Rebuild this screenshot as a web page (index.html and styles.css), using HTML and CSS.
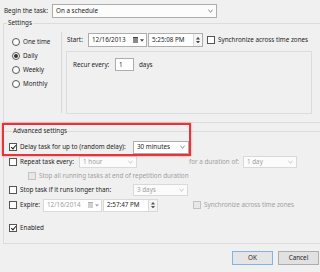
FILE: index.html
```html
<!DOCTYPE html>
<html>
<head>
<meta charset="utf-8">
<link rel="stylesheet" href="styles.css">
</head>
<body>
<div class="top">
  <span class="top-label">Begin the task:</span>
  <div class="select main"><span>On a schedule</span><svg class="chev" viewBox="0 0 6 4"><path d="M0.5 0.8 L3 3.2 L5.5 0.8" fill="none" stroke="#444" stroke-width="0.9"/></svg></div>
</div>

<fieldset class="group settings">
  <legend>Settings</legend>
  <div class="settings-body">
    <div class="freq">
      <div class="radio-row"><span class="radio"></span><span>One time</span></div>
      <div class="radio-row"><span class="radio on"></span><span>Daily</span></div>
      <div class="radio-row"><span class="radio"></span><span>Weekly</span></div>
      <div class="radio-row"><span class="radio"></span><span>Monthly</span></div>
    </div>
    <div class="vsep"></div>
    <div class="sched">
      <div class="start-row">
        <span class="start-label">Start:</span>
        <div class="field date"><span>12/16/2013</span><span class="cal"></span><svg class="tri" viewBox="0 0 5 3"><path d="M0 0 L5 0 L2.5 3 Z" fill="#444"/></svg></div>
        <div class="field time"><span>5:25:08 PM</span><span class="spin"><svg viewBox="0 0 5 3"><path d="M0 3 L5 3 L2.5 0 Z" fill="#444"/></svg><svg viewBox="0 0 5 3"><path d="M0 0 L5 0 L2.5 3 Z" fill="#444"/></svg></span></div>
        <span class="check sync"></span><span>Synchronize across time zones</span>
      </div>
      <div class="recur-box">
        <div class="recur-row"><span class="recur-label">Recur every:</span><div class="field num">1</div><span class="days">days</span></div>
      </div>
    </div>
  </div>
</fieldset>

<fieldset class="group advanced">
  <legend>Advanced settings</legend>
  <div class="row r-delay">
    <span class="check on"></span><span class="lbl-delay">Delay task for up to (random delay):</span>
    <div class="select s-delay"><span>30 minutes</span><svg class="chev" viewBox="0 0 6 4"><path d="M0.5 0.8 L3 3.2 L5.5 0.8" fill="none" stroke="#444" stroke-width="0.9"/></svg></div>
  </div>
  <div class="row r-repeat">
    <span class="check"></span><span class="lbl-repeat">Repeat task every:</span>
    <div class="select dis s-hour"><span>1 hour</span><svg class="chev" viewBox="0 0 6 4"><path d="M0.5 0.8 L3 3.2 L5.5 0.8" fill="none" stroke="#aaa" stroke-width="0.9"/></svg></div>
    <span class="dis-text lbl-dur">for a duration of:</span>
    <div class="select dis s-day"><span>1 day</span><svg class="chev" viewBox="0 0 6 4"><path d="M0.5 0.8 L3 3.2 L5.5 0.8" fill="none" stroke="#aaa" stroke-width="0.9"/></svg></div>
  </div>
  <div class="row r-stopall">
    <span class="check dis"></span><span class="dis-text">Stop all running tasks at end of repetition duration</span>
  </div>
  <div class="row r-stop">
    <span class="check"></span><span class="lbl-stop">Stop task if it runs longer than:</span>
    <div class="select dis s-days"><span>3 days</span><svg class="chev" viewBox="0 0 6 4"><path d="M0.5 0.8 L3 3.2 L5.5 0.8" fill="none" stroke="#aaa" stroke-width="0.9"/></svg></div>
  </div>
  <div class="row r-expire">
    <span class="check"></span><span class="lbl-expire">Expire:</span>
    <div class="field date dis e-date"><span>12/16/2014</span><span class="cal dis"></span><svg class="tri" viewBox="0 0 5 3"><path d="M0 0 L5 0 L2.5 3 Z" fill="#aaa"/></svg></div>
    <div class="field time e-time"><span>2:57:47 PM</span><span class="spin"><svg viewBox="0 0 5 3"><path d="M0 3 L5 3 L2.5 0 Z" fill="#555"/></svg><svg viewBox="0 0 5 3"><path d="M0 0 L5 0 L2.5 3 Z" fill="#555"/></svg></span></div>
    <span class="check dis e-sync"></span><span class="dis-text">Synchronize across time zones</span>
  </div>
  <div class="row r-enabled">
    <span class="check on"></span><span>Enabled</span>
  </div>
</fieldset>

<div class="buttons">
  <div class="btn default">OK</div>
  <div class="btn">Cancel</div>
</div>

<div class="highlight"></div>
</body>
</html>
```

FILE: styles.css
```css
html, body {
  margin: 0;
  padding: 0;
}
body {
  width: 320px;
  height: 272px;
  overflow: hidden;
  position: relative;
  background: #f0f0f0;
  font-family: "Noto Sans", "DejaVu Sans", sans-serif;
  font-size: 6.3px;
  color: #1e1e1e;
  line-height: 8px;
}
.top {
  display: flex;
  align-items: center;
  height: 14px;
  margin-top: 4px;
  padding-left: 4px;
}
.top-label {
  width: 48px;
}
.select {
  box-sizing: border-box;
  display: flex;
  align-items: center;
  justify-content: space-between;
  border: 1px solid #adadad;
  background: #fcfcfc;
  padding: 0 3px 0 3px;
}
.select.main {
  width: 165px;
  height: 14px;
}
.chev {
  width: 5px;
  height: 4px;
  flex: none;
}
.select.dis {
  border-color: #d9d9d9;
  background: #fbfbfb;
  color: #a0a0a0;
}
.dis-text {
  color: #a0a0a0;
  white-space: nowrap;
}

.group {
  box-sizing: border-box;
  margin: 0 0 0 3px;
  padding: 0;
  min-width: 0;
  width: 317px;
  border: 1px solid #dcdcdc;
  border-right: none;
}
.group legend {
  margin-left: 3px;
  padding: 0 1px;
  line-height: 8px;
}
.settings {
  margin-top: 1px;
  padding-bottom: 8px;
}
.settings-body {
  display: flex;
  align-items: flex-start;
}
.freq {
  width: 57px;
  padding-top: 8px;
}
.radio-row {
  display: flex;
  align-items: center;
  height: 14px;
  padding-left: 8px;
  gap: 3px;
}
.radio {
  box-sizing: border-box;
  width: 8px;
  height: 8px;
  border: 1px solid #555;
  border-radius: 50%;
  background: #fff;
  display: flex;
  align-items: center;
  justify-content: center;
}
.radio.on::after {
  content: "";
  width: 4px;
  height: 4px;
  border-radius: 50%;
  background: #333;
}
.vsep {
  width: 0;
  height: 81px;
  margin-top: 5px;
  border-left: 1px solid #d8d8d8;
}
.sched {
  padding-left: 4px;
}
.start-row {
  display: flex;
  align-items: center;
  height: 14px;
  margin-top: 6px;
  padding-left: 1px;
  white-space: nowrap;
}
.start-label {
  width: 21px;
}
.field {
  box-sizing: border-box;
  display: flex;
  align-items: center;
  height: 14px;
  border: 1px solid #adadad;
  background: #fff;
  padding-left: 3px;
}
.field.date {
  width: 59px;
}
.field.time {
  width: 55px;
  margin-left: 1px;
}
.cal {
  width: 5px;
  height: 6px;
  margin-left: auto;
  background: #8a8a8a;
  border-top: 1px solid #444;
  box-sizing: border-box;
}
.cal.dis {
  background: #d0d0d0;
  border-top-color: #b0b0b0;
}
.tri {
  width: 4px;
  height: 3px;
  margin: 0 2px 0 2px;
}
.spin {
  margin-left: auto;
  width: 8px;
  height: 100%;
  border-left: 1px solid #d9d9d9;
  background: #f4f4f4;
  display: flex;
  flex-direction: column;
  align-items: center;
  justify-content: center;
  gap: 1px;
}
.spin svg {
  width: 4px;
  height: 2.5px;
}
.check {
  box-sizing: border-box;
  flex: none;
  width: 8px;
  height: 8px;
  border: 1px solid #555;
  background: #fff;
  position: relative;
}
.check.on::after {
  content: "";
  position: absolute;
  left: 1.5px;
  top: 0px;
  width: 2px;
  height: 4px;
  border: solid #222;
  border-width: 0 1.2px 1.2px 0;
  transform: rotate(40deg);
}
.check.dis {
  border-color: #c2c2c2;
  background: #e8e8e8;
}
.check.sync {
  margin-left: 4px;
  margin-right: 3px;
}
.recur-box {
  box-sizing: border-box;
  width: 246px;
  height: 63px;
  margin-top: 4px;
  border: 1px solid #dcdcdc;
  padding: 6px 0 0 6px;
}
.recur-row {
  display: flex;
  align-items: center;
  height: 13px;
}
.recur-label {
  width: 42px;
}
.field.num {
  width: 19px;
  height: 13px;
}
.days {
  margin-left: 5px;
}

.advanced {
  margin-top: 4px;
  padding: 5px 0 8px 5px;
}
.row {
  display: flex;
  align-items: center;
  height: 14px;
  white-space: nowrap;
}
.row > .check:first-child {
  margin-right: 3px;
}
.lbl-delay {
  width: 113px;
}
.s-delay {
  width: 56px;
  height: 13px;
  background: #fff;
}
.r-repeat {
  margin-top: 1px;
}
.lbl-repeat {
  width: 59px;
}
.s-hour {
  width: 58px;
  height: 12px;
}
.lbl-dur {
  margin-left: 52px;
  width: 54px;
}
.s-day {
  width: 54px;
  height: 12px;
}
.r-stopall {
  padding-left: 19px;
}
.r-stopall .check {
  margin-right: 2px;
}
.lbl-stop {
  width: 113px;
}
.s-days {
  width: 55px;
  height: 12px;
}
.r-expire {
  margin-top: 1px;
}
.lbl-expire {
  width: 23px;
}
.e-date {
  width: 56px;
  height: 13px;
  border-color: #d9d9d9;
  color: #a0a0a0;
}
.e-time {
  width: 54px;
  height: 13px;
  margin-left: 4px;
  border-color: #d9d9d9;
}
.e-sync {
  margin-left: 35px;
  margin-right: 3px;
}
.r-enabled {
  margin-top: 9px;
}

.buttons {
  display: flex;
  justify-content: flex-end;
  gap: 5px;
  margin-top: 7px;
  padding-right: 1px;
}
.btn {
  box-sizing: border-box;
  width: 41px;
  height: 14px;
  border: 1px solid #adadad;
  background: #e1e1e1;
  display: flex;
  align-items: center;
  justify-content: center;
}
.btn.default {
  border-color: #7eb4ea;
  background: #e5e5e5;
}

.highlight {
  position: absolute;
  left: 2px;
  top: 123px;
  width: 185px;
  height: 29px;
  border: 2px solid #e6353a;
  box-shadow: 0 0 2px rgba(230, 60, 60, 0.6);
}
```
